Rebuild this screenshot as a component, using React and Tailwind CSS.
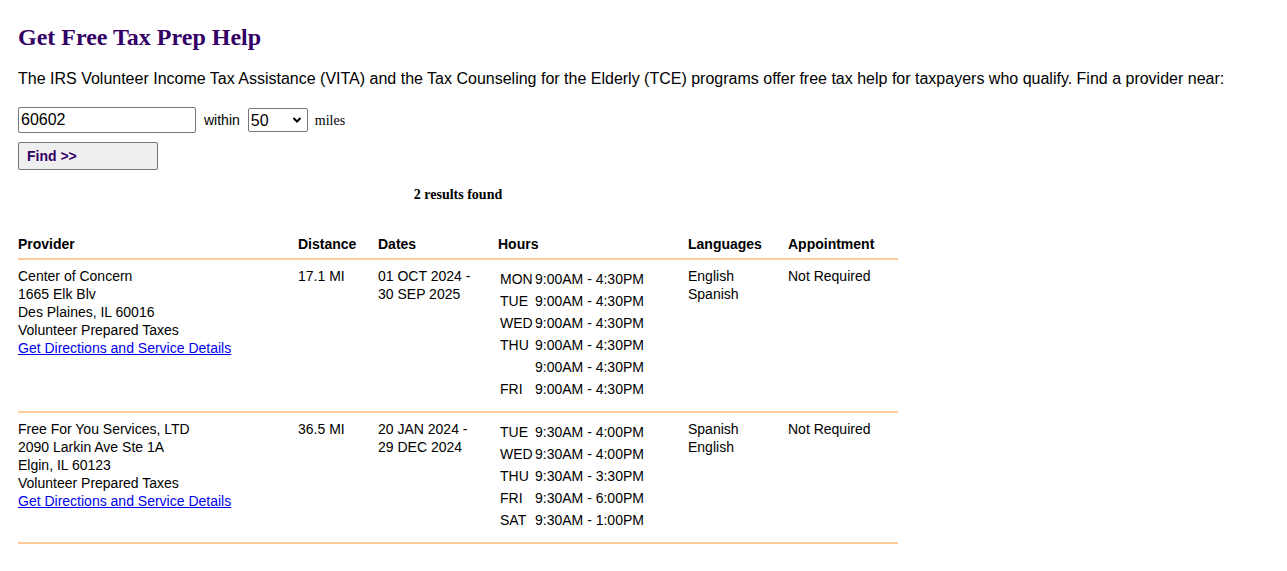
import React from 'react';

const providers = [
  {
    name: 'Center of Concern',
    street: '1665 Elk Blv',
    city: 'Des Plaines, IL 60016',
    kind: 'Volunteer Prepared Taxes',
    distance: '17.1 MI',
    dates: ['01 OCT 2024 -', '30 SEP 2025'],
    hours: [
      ['MON', '9:00AM - 4:30PM'],
      ['TUE', '9:00AM - 4:30PM'],
      ['WED', '9:00AM - 4:30PM'],
      ['THU', '9:00AM - 4:30PM'],
      ['', '9:00AM - 4:30PM'],
      ['FRI', '9:00AM - 4:30PM'],
    ],
    languages: ['English', 'Spanish'],
    appt: 'Not Required',
  },
  {
    name: 'Free For You Services, LTD',
    street: '2090 Larkin Ave Ste 1A',
    city: 'Elgin, IL 60123',
    kind: 'Volunteer Prepared Taxes',
    distance: '36.5 MI',
    dates: ['20 JAN 2024 -', '29 DEC 2024'],
    hours: [
      ['TUE', '9:30AM - 4:00PM'],
      ['WED', '9:30AM - 4:00PM'],
      ['THU', '9:30AM - 3:30PM'],
      ['FRI', '9:30AM - 6:00PM'],
      ['SAT', '9:30AM - 1:00PM'],
    ],
    languages: ['Spanish', 'English'],
    appt: 'Not Required',
  },
];

export default function App() {
  return (
    <div className="min-h-screen bg-white px-[18px] pt-[23px] text-black font-['Liberation_Sans',Arial,sans-serif]">

      {/* -- header -- */}
      <h1 className="font-['Liberation_Serif','Times_New_Roman',serif] text-[24px] font-bold leading-[28px] text-[#330066]">
        Get Free Tax Prep Help
      </h1>
      <p className="mt-[19px] text-[16px] leading-[18px]">
        The IRS Volunteer Income Tax Assistance (VITA) and the Tax Counseling for the Elderly (TCE) programs offer free tax help for taxpayers who qualify. Find a provider near:
      </p>

      {/* -- search form -- */}
      <div className="mt-[19px] flex items-center">
        <input
          defaultValue="60602"
          className="h-[26px] w-[178px] border border-[#767676] rounded-[2px] px-[2px] text-[16px] outline-none"
        />
        <span className="ml-[8px] text-[14px]">within</span>
        <div className="relative ml-[8px]">
          <select
            defaultValue="50"
            className="h-[24px] w-[60px] appearance-none border border-[#767676] rounded-[2px] bg-white pl-[2px] text-[16px] outline-none"
          >
            <option>50</option>
          </select>
          <svg className="pointer-events-none absolute right-[6px] top-[8px]" width="10" height="8" viewBox="0 0 10 8">
            <path d="M1.5 2 L5 5.5 L8.5 2" fill="none" stroke="#000" strokeWidth="2" />
          </svg>
        </div>
        <span className="ml-[7px] font-['Liberation_Serif','Times_New_Roman',serif] text-[14px]">miles</span>
      </div>
      <button className="mt-[9px] block h-[28px] w-[140px] rounded-[2px] border border-[#767676] bg-[#efefef] pl-[8px] text-left text-[14px] font-bold text-[#330066]">
        Find &gt;&gt;
      </button>

      {/* -- results -- */}
      <div className="w-[880px]">
        <p className="mt-[17px] text-center font-['Liberation_Serif','Times_New_Roman',serif] text-[14px] font-bold leading-[16px]">
          2 results found
        </p>

        <table className="mt-[32px] w-[880px] border-collapse text-[14px] leading-[18px]">
          <thead>
            <tr className="border-b-2 border-[#ffcc99] text-left">
              <th className="w-[280px] pb-[5px] font-bold">Provider</th>
              <th className="w-[80px] pb-[5px] font-bold">Distance</th>
              <th className="w-[120px] pb-[5px] font-bold">Dates</th>
              <th className="w-[190px] pb-[5px] font-bold">Hours</th>
              <th className="w-[100px] pb-[5px] font-bold">Languages</th>
              <th className="w-[110px] pb-[5px] font-bold">Appointment</th>
            </tr>
          </thead>
          <tbody>
            {providers.map(p => (
              <tr key={p.name} className="border-b-2 border-[#ffcc99] align-top">
                <td className="pt-[7px]">
                  <div>{p.name}</div>
                  <div>{p.street}</div>
                  <div>{p.city}</div>
                  <div>{p.kind}</div>
                  <a href="#" className="text-[#0000ee] underline">Get Directions and Service Details</a>
                </td>
                <td className="pt-[7px]">{p.distance}</td>
                <td className="pt-[7px]">
                  {p.dates.map(d => <div key={d}>{d}</div>)}
                </td>
                <td className="pt-[8px] pb-[11px]">
                  <table className="ml-[2px] border-separate border-spacing-y-[4px] -my-[2px]">
                    <tbody>
                      {p.hours.map(([day, time], i) => (
                        <tr key={i}>
                          <td className="w-[35px] p-0">{day}</td>
                          <td className="p-0">{time}</td>
                        </tr>
                      ))}
                    </tbody>
                  </table>
                </td>
                <td className="pt-[7px]">
                  {p.languages.map(l => <div key={l}>{l}</div>)}
                </td>
                <td className="pt-[7px]">{p.appt}</td>
              </tr>
            ))}
          </tbody>
        </table>
      </div>
    </div>
  );
}
